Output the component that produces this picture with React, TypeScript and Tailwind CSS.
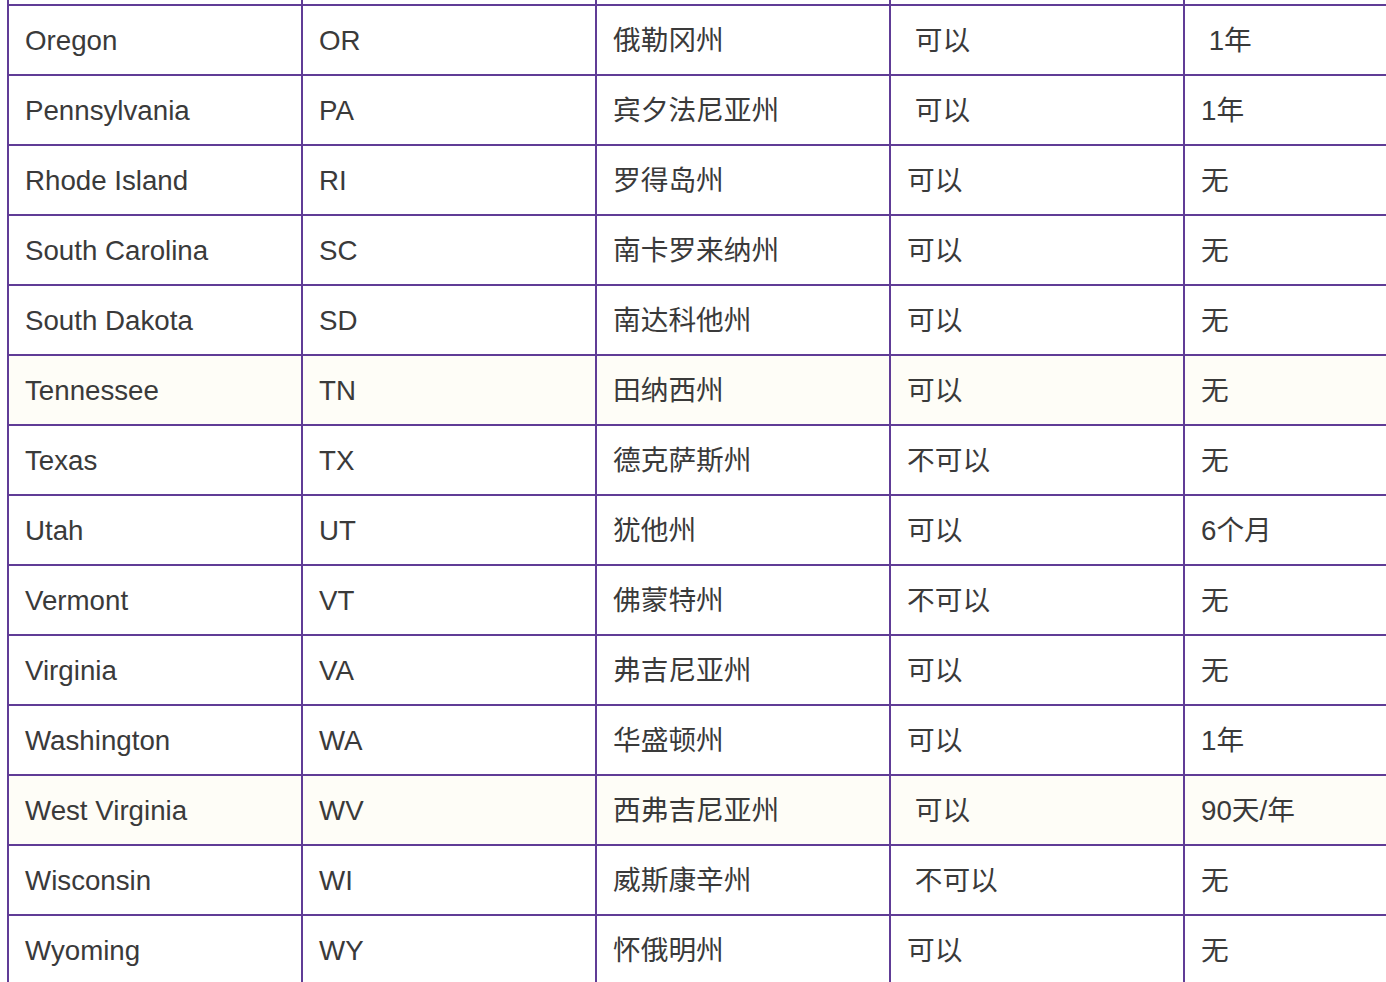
const rows: [string, string, string, string, string, boolean?][] = [
  ["Oregon", "OR", "俄勒冈州", "\u00a0可以", "\u00a01年"],
  ["Pennsylvania", "PA", "宾夕法尼亚州", "\u00a0可以", "1年"],
  ["Rhode Island", "RI", "罗得岛州", "可以", "无"],
  ["South Carolina", "SC", "南卡罗来纳州", "可以", "无"],
  ["South Dakota", "SD", "南达科他州", "可以", "无"],
  ["Tennessee", "TN", "田纳西州", "可以", "无", true],
  ["Texas", "TX", "德克萨斯州", "不可以", "无"],
  ["Utah", "UT", "犹他州", "可以", "6个月"],
  ["Vermont", "VT", "佛蒙特州", "不可以", "无"],
  ["Virginia", "VA", "弗吉尼亚州", "可以", "无"],
  ["Washington", "WA", "华盛顿州", "可以", "1年"],
  ["West Virginia", "WV", "西弗吉尼亚州", "\u00a0可以", "90天/年", true],
  ["Wisconsin", "WI", "威斯康辛州", "\u00a0不可以", "无"],
  ["Wyoming", "WY", "怀俄明州", "可以", "无"],
];

const cellClass =
  "border-2 border-[#603c96] h-[70px] w-[294px] pl-[16px] pr-2 pt-[2px] pb-0 align-middle whitespace-nowrap leading-none";

export default function App() {
  return (
    <div className="w-[1386px] h-[982px] overflow-hidden bg-white">
      {/* table is scrolled: the row above Oregon is only partly in view */}
      <div className="pl-[7px] -mt-[66px]">
        <table
          className="border-collapse w-[1470px] table-fixed text-[27.7px] text-[#3a3a3a]"
          style={{ fontFamily: '"Liberation Sans", Arial, "Noto Sans CJK SC", sans-serif' }}
        >
          <tbody>
            <tr className="bg-white">
              {[0, 1, 2, 3, 4].map((i) => (
                <td key={i} className={cellClass}></td>
              ))}
            </tr>
            {rows.map((r) => (
              <tr key={r[1]} className={r[5] ? "bg-[#fefdf7]" : "bg-white"}>
                {r.slice(0, 5).map((cell, i) => (
                  <td key={i} className={cellClass}>
                    {cell as string}
                  </td>
                ))}
              </tr>
            ))}
          </tbody>
        </table>
      </div>
    </div>
  );
}
